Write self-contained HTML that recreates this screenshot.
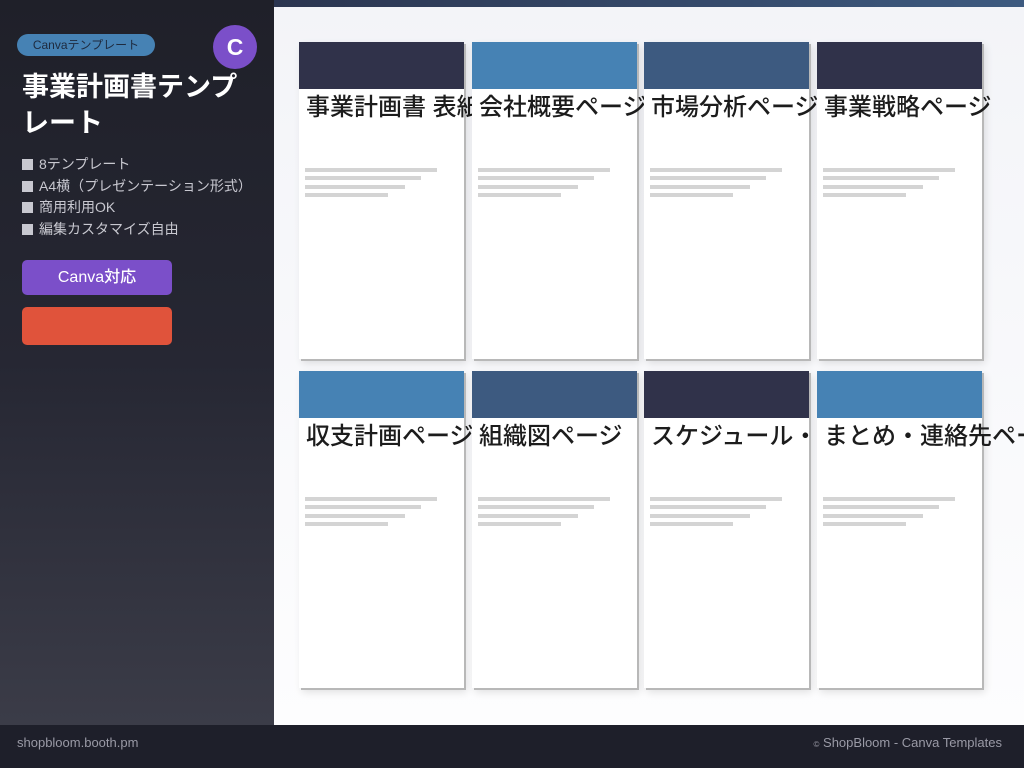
<!DOCTYPE html>
<html><head><meta charset="utf-8"><style>
*{margin:0;padding:0;box-sizing:border-box}
body{width:1024px;height:768px;overflow:hidden;position:relative;font-family:"Liberation Sans","Noto Sans CJK JP",sans-serif;background:#fff}
.side{position:absolute;left:0;top:0;width:274px;height:725px;background:linear-gradient(#1f2029,#262733 50%,#3b3c48)}
.main{position:absolute;left:274px;top:0;width:750px;height:725px;background:linear-gradient(#f3f4f8,#fdfdfe)}
.topbar{position:absolute;left:274px;top:0;width:750px;height:7px;background:linear-gradient(90deg,#2b3550,#3d5a80)}
.tag{position:absolute;left:17px;top:34px;width:138px;height:22px;border-radius:11px;background:#4682b4;color:#1e2a3e;font-size:12px;line-height:22px;text-align:center}
.c{position:absolute;left:213px;top:25px;width:44px;height:44px;border-radius:50%;background:#7b4fc9;color:#fff;font-size:23px;font-weight:bold;line-height:44px;text-align:center}
h1{position:absolute;left:22px;top:69px;width:240px;color:#fff;font-size:27px;line-height:36px;font-weight:bold}
ul{position:absolute;left:22px;top:154px;list-style:none;color:#c8c8d0;font-size:14px;line-height:21.5px}
ul li:before{content:"";display:inline-block;width:11px;height:11px;background:#c8c8d0;margin-right:6px;vertical-align:-1px}
.b1{position:absolute;left:22px;top:260px;width:150px;height:35px;border-radius:5px;background:#7b4fc9;color:#fff;font-size:16px;font-weight:500;line-height:35px;text-align:center}
.b2{position:absolute;left:22px;top:307px;width:150px;height:38px;border-radius:5px;background:#e0533b}
.card{position:absolute;width:165px;height:317px;background:#fff;box-shadow:2px 2px 0 #b8b8b8,3px 4px 8px rgba(0,0,0,.12)}
.hd{height:47px}
.t{position:absolute;left:7px;top:50px;white-space:nowrap;font-size:24px;line-height:32px;color:#1c1c1c;font-weight:500}
.ln{position:absolute;left:6px;height:4px;background:#d4d4d4}
.foot{position:absolute;left:0;top:725px;width:1024px;height:43px;background:#1e1f2a;color:#9a9aa6;font-size:13px}
</style></head><body>
<div class="side"></div>
<div class="main"></div>
<div class="topbar"></div>
<div class="tag">Canvaテンプレート</div>
<div class="c">C</div>
<h1>事業計画書テンプレート</h1>
<ul><li>8テンプレート</li><li>A4横（プレゼンテーション形式）</li><li>商用利用OK</li><li>編集カスタマイズ自由</li></ul>
<div class="b1">Canva対応</div>
<div class="b2"></div>

<div class="card" style="left:299px;top:42px"><div class="hd" style="background:#30324a"></div><div class="t">事業計画書 表紙</div><div class="ln" style="top:126px;width:132px"></div><div class="ln" style="top:134px;width:116px"></div><div class="ln" style="top:143px;width:100px"></div><div class="ln" style="top:151px;width:83px"></div></div>
<div class="card" style="left:472px;top:42px"><div class="hd" style="background:#4682b4"></div><div class="t">会社概要ページ</div><div class="ln" style="top:126px;width:132px"></div><div class="ln" style="top:134px;width:116px"></div><div class="ln" style="top:143px;width:100px"></div><div class="ln" style="top:151px;width:83px"></div></div>
<div class="card" style="left:644px;top:42px"><div class="hd" style="background:#3d5a80"></div><div class="t">市場分析ページ</div><div class="ln" style="top:126px;width:132px"></div><div class="ln" style="top:134px;width:116px"></div><div class="ln" style="top:143px;width:100px"></div><div class="ln" style="top:151px;width:83px"></div></div>
<div class="card" style="left:817px;top:42px"><div class="hd" style="background:#30324a"></div><div class="t">事業戦略ページ</div><div class="ln" style="top:126px;width:132px"></div><div class="ln" style="top:134px;width:116px"></div><div class="ln" style="top:143px;width:100px"></div><div class="ln" style="top:151px;width:83px"></div></div>

<div class="card" style="left:299px;top:371px"><div class="hd" style="background:#4682b4"></div><div class="t">収支計画ページ</div><div class="ln" style="top:126px;width:132px"></div><div class="ln" style="top:134px;width:116px"></div><div class="ln" style="top:143px;width:100px"></div><div class="ln" style="top:151px;width:83px"></div></div>
<div class="card" style="left:472px;top:371px"><div class="hd" style="background:#3d5a80"></div><div class="t">組織図ページ</div><div class="ln" style="top:126px;width:132px"></div><div class="ln" style="top:134px;width:116px"></div><div class="ln" style="top:143px;width:100px"></div><div class="ln" style="top:151px;width:83px"></div></div>
<div class="card" style="left:644px;top:371px"><div class="hd" style="background:#30324a"></div><div class="t">スケジュール・</div><div class="ln" style="top:126px;width:132px"></div><div class="ln" style="top:134px;width:116px"></div><div class="ln" style="top:143px;width:100px"></div><div class="ln" style="top:151px;width:83px"></div></div>
<div class="card" style="left:817px;top:371px"><div class="hd" style="background:#4682b4"></div><div class="t">まとめ・連絡先ページ</div><div class="ln" style="top:126px;width:132px"></div><div class="ln" style="top:134px;width:116px"></div><div class="ln" style="top:143px;width:100px"></div><div class="ln" style="top:151px;width:83px"></div></div>

<div class="foot"><span style="position:absolute;left:17px;top:10px">shopbloom.booth.pm</span><span style="position:absolute;right:22px;top:10px"><span style="font-size:8px">©</span> ShopBloom - Canva Templates</span></div>
</body></html>
